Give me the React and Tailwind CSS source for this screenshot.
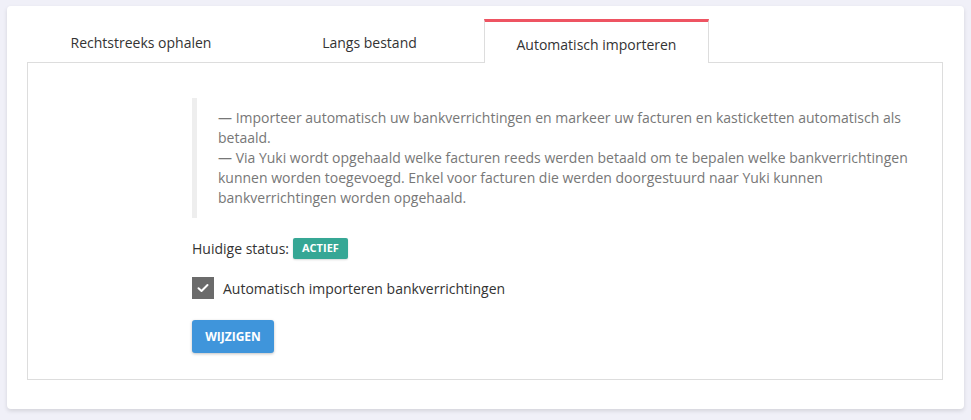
import React from "react";

const tabs = ["Rechtstreeks ophalen", "Langs bestand", "Automatisch importeren"];

const App = () => {
  const active = 2;

  return (
    <div
      className="min-h-[420px] w-full bg-[#f0f0f8] px-[7px] pt-[6px] pb-[10px]"
      style={{ fontFamily: '"Open Sans", sans-serif' }}
    >
      <div className="rounded-[4px] bg-white pl-[20px] pr-[21px] pt-[13px] pb-[29px] shadow-[0_2px_4px_rgba(0,0,0,0.12)]">
        {/* Tabs */}
        <div className="grid grid-cols-[228px_229px_225px] border-b border-[#dddddd]">
          {tabs.map((t, i) => (
            <div
              key={t}
              className={
                i === active
                  ? "-mb-px flex h-[44px] items-center justify-center border-x border-t-[3px] border-[#dddddd] border-t-[#ee5462] bg-white pt-[3px] text-[14px] text-[#333]"
                  : "flex h-[43px] items-center justify-center pt-[3px] text-[14px] text-[#333]"
              }
            >
              {t}
            </div>
          ))}
        </div>

        {/* Panel */}
        <div className="h-[317px] border-x border-b border-[#dddddd] pt-[35px] pl-[164px] pr-[14px]">
          <blockquote className="border-l-[5px] border-[#eeeeee] py-[10px] pl-[21px] text-[14px] leading-[20px] text-[#777777]">
            <p>— Importeer automatisch uw bankverrichtingen en markeer uw facturen en kasticketten automatisch als betaald.</p>
            <p>— Via Yuki wordt opgehaald welke facturen reeds werden betaald om te bepalen welke bankverrichtingen kunnen worden toegevoegd. Enkel voor facturen die werden doorgestuurd naar Yuki kunnen bankverrichtingen worden opgehaald.</p>
          </blockquote>

          <div className="mt-[20px] flex h-[21px] items-center text-[14px] text-[#333]">
            <span>Huidige status:</span>
            <span className="ml-[4px] flex h-[21px] items-center rounded-[2px] bg-[#36a795] px-[9px] text-[11px] font-bold text-white shadow-[0_1px_2px_rgba(0,0,0,0.15)]">
              ACTIEF
            </span>
          </div>

          <label className="mt-[18px] flex items-center text-[14px] text-[#333]">
            <span className="flex h-[22px] w-[22px] items-center justify-center bg-[#6b6b6b]">
              <svg width="12" height="10" viewBox="0 0 12 10" fill="none">
                <path d="M1.5 5.2 L4.5 8 L10.5 2" stroke="white" strokeWidth="2" strokeLinecap="round" strokeLinejoin="round" />
              </svg>
            </span>
            <span className="ml-[9px]">Automatisch importeren bankverrichtingen</span>
          </label>

          <button className="mt-[21px] h-[33px] w-[82px] rounded-[3px] bg-[#3f95db] text-[12px] font-bold text-white shadow-[0_1px_3px_rgba(0,0,0,0.25)]">
            WIJZIGEN
          </button>
        </div>
      </div>
    </div>
  );
};

export default App;
